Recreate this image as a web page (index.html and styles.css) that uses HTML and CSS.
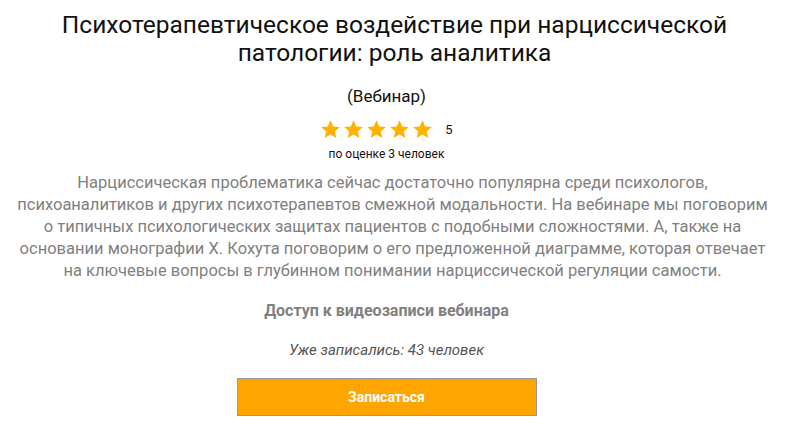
FILE: index.html
```html
<html>
<head>
	<title>Вебинар</title>
	<link rel="stylesheet" href="styles.css">
</head>
<body>
	<div class="webinar">
		<h1 class="webinar-title">Психотерапевтическое воздействие при нарциссической патологии: роль аналитика</h1>
		<div class="webinar-type">(Вебинар)</div>
		<div class="rating">
			<div class="rating-stars">
				<svg class="star" viewBox="0 0 24 24"><path d="M12 1.5l3.1 7 7.6.7-5.8 5 1.8 7.5L12 17.8l-6.7 3.9 1.8-7.5-5.8-5 7.6-.7z"/></svg>
				<svg class="star" viewBox="0 0 24 24"><path d="M12 1.5l3.1 7 7.6.7-5.8 5 1.8 7.5L12 17.8l-6.7 3.9 1.8-7.5-5.8-5 7.6-.7z"/></svg>
				<svg class="star" viewBox="0 0 24 24"><path d="M12 1.5l3.1 7 7.6.7-5.8 5 1.8 7.5L12 17.8l-6.7 3.9 1.8-7.5-5.8-5 7.6-.7z"/></svg>
				<svg class="star" viewBox="0 0 24 24"><path d="M12 1.5l3.1 7 7.6.7-5.8 5 1.8 7.5L12 17.8l-6.7 3.9 1.8-7.5-5.8-5 7.6-.7z"/></svg>
				<svg class="star" viewBox="0 0 24 24"><path d="M12 1.5l3.1 7 7.6.7-5.8 5 1.8 7.5L12 17.8l-6.7 3.9 1.8-7.5-5.8-5 7.6-.7z"/></svg>
				<span class="rating-value">5</span>
			</div>
			<div class="rating-votes">по оценке 3 человек</div>
		</div>
		<p class="webinar-desc">Нарциссическая проблематика сейчас достаточно популярна среди психологов,<br>
			психоаналитиков и других психотерапевтов смежной модальности. На вебинаре мы поговорим<br>
			о типичных психологических защитах пациентов с подобными сложностями. А, также на<br>
			основании монографии Х. Кохута поговорим о его предложенной диаграмме, которая отвечает<br>
			на ключевые вопросы в глубинном понимании нарциссической регуляции самости.</p>
		<div class="webinar-access">Доступ к видеозаписи вебинара</div>
		<div class="webinar-count">Уже записались: 43 человек</div>
		<button class="signup-button">Записаться</button>
	</div>
</body>
</html>
```

FILE: styles.css
```css
body {
	margin: 0;
	padding-right: 14px;
	background: #fff;
	font-family: Roboto, "Noto Sans", sans-serif;
	color: #111;
}

.webinar {
	width: 750px;
	margin: 0 auto;
	padding-top: 11px;
	display: flex;
	flex-direction: column;
	align-items: center;
	text-align: center;
}

.webinar-title {
	margin: 0 0 0 16px;
	width: 690px;
	font-size: 24.5px;
	font-weight: 400;
	line-height: 28px;
}

.webinar-type {
	margin-top: 19px;
	font-size: 17px;
	line-height: 20px;
}

.rating {
	margin-top: 13px;
	display: flex;
	flex-direction: column;
	align-items: center;
}

.rating-stars {
	display: flex;
	align-items: center;
	gap: 2px;
}

.star {
	width: 21px;
	height: 21px;
	fill: #ffb300;
}

.rating-value {
	margin-left: 10px;
	font-size: 13px;
	color: #111;
}

.rating-votes {
	margin-top: 7px;
	font-size: 12px;
	line-height: 14px;
}

.webinar-desc {
	margin: 11px 0 0 12px;
	white-space: nowrap;
	font-size: 16.5px;
	line-height: 22px;
	color: #808080;
}

.webinar-access {
	margin-top: 19px;
	font-size: 16px;
	font-weight: 700;
	color: #808080;
	line-height: 20px;
}

.webinar-count {
	margin-top: 19px;
	font-size: 15px;
	font-style: italic;
	color: #555;
	line-height: 20px;
}

.signup-button {
	margin-top: 18px;
	width: 300px;
	height: 38px;
	background: #ffa500;
	border: 1px solid #999;
	color: #fff;
	font-family: Roboto, "Noto Sans", sans-serif;
	font-size: 14px;
	font-weight: 700;
	cursor: pointer;
}
```
